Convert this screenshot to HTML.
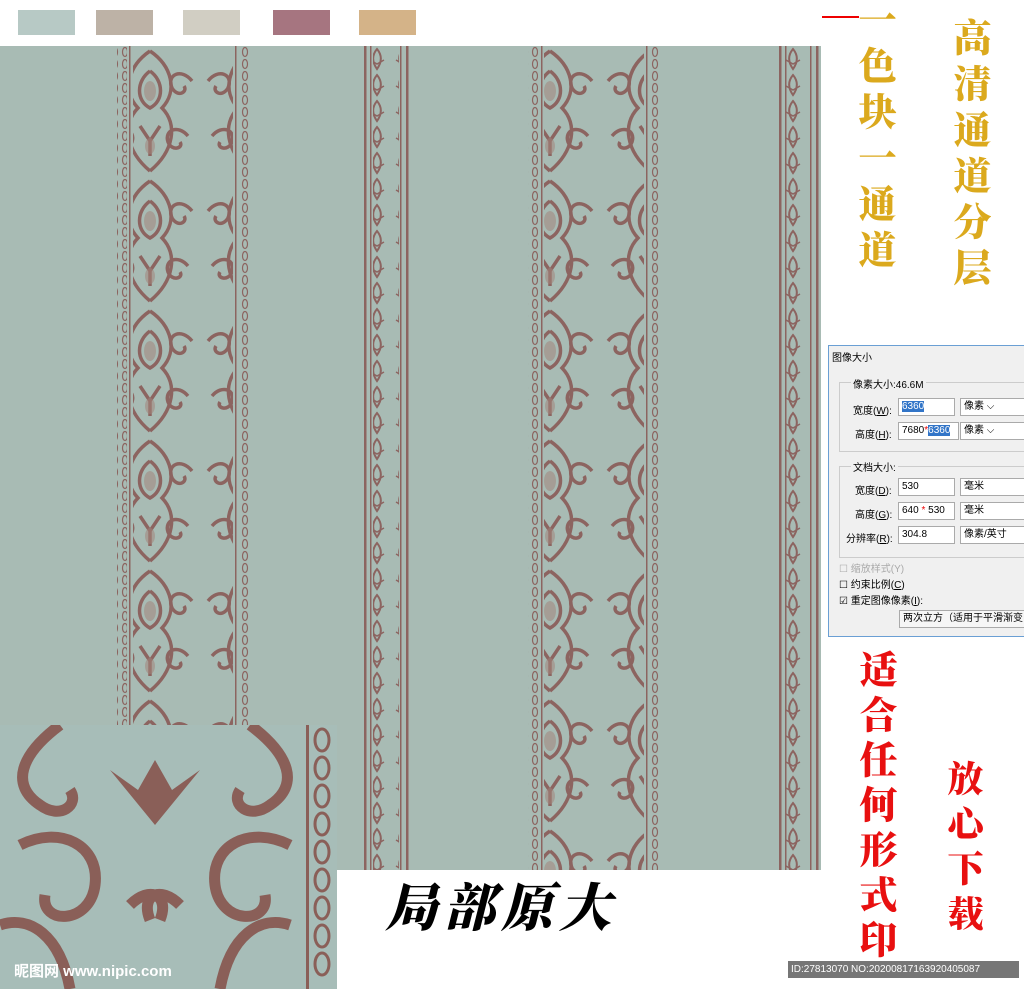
<!DOCTYPE html>
<html><head><meta charset="utf-8"><style>
body{margin:0;width:1024px;height:989px;position:relative;overflow:hidden;background:#fff;font-family:"Liberation Sans","Noto Sans CJK SC",sans-serif}
.sw{position:absolute;top:10px;width:57px;height:25px}
.v{position:absolute;writing-mode:vertical-rl;font-family:"Noto Serif CJK SC","Noto Sans CJK SC",serif;font-weight:900}
.dlg{position:absolute;left:828px;top:345px;width:196px;height:290px;background:#f0f0f0;border:1px solid #6a9fd4;font-size:10px;color:#000}
.dlg .r{position:absolute;white-space:nowrap}
.in{position:absolute;background:#fff;border:1px solid #aaa;height:16px;line-height:16px;padding-left:3px;font-size:10px}
.grp{position:absolute;border:1px solid #ccc}
</style></head><body>
<div class="sw" style="left:18px;background:#b7c9c5"></div>
<div class="sw" style="left:96px;background:#bdb2a6"></div>
<div class="sw" style="left:183px;background:#d1cec3"></div>
<div class="sw" style="left:273px;background:#a67580"></div>
<div class="sw" style="left:359px;background:#d4b388"></div>
<div style="position:absolute;left:822px;top:16px;width:37px;height:2px;background:#e00"></div>

<svg style="position:absolute;left:0;top:46px" width="821" height="824">
<defs>
<pattern id="orn" width="100" height="130" patternUnits="userSpaceOnUse">
<g fill="none" stroke="#8c6460" stroke-width="3.5">
<path d="M50 5 C28 20 22 45 38 62 C22 78 26 105 50 125"/>
<path d="M50 5 C72 20 78 45 62 62 C78 78 74 105 50 125"/>
<path d="M50 25 C36 35 36 55 50 62 C64 55 64 35 50 25"/>
<path d="M8 35 C18 22 34 28 28 42 C22 52 12 46 16 40"/>
<path d="M92 35 C82 22 66 28 72 42 C78 52 88 46 84 40"/>
<path d="M12 90 C22 78 36 84 32 96 C28 106 16 102 20 96"/>
<path d="M88 90 C78 78 64 84 68 96 C72 106 84 102 80 96"/>
<path d="M40 80 L50 95 L60 80 M50 95 L50 110"/>
</g>
<g fill="#a2847c" opacity="0.55"><ellipse cx="50" cy="45" rx="6" ry="10"/><ellipse cx="50" cy="100" rx="5" ry="8"/></g>
</pattern>
<pattern id="nar" width="26" height="26" patternUnits="userSpaceOnUse">
<path d="M13 3 C8 9 8 16 13 23 C18 16 18 9 13 3Z" fill="none" stroke="#8c6460" stroke-width="2"/>
<path d="M6 14 L13 18 L20 14" fill="none" stroke="#8c6460" stroke-width="1.5"/>
</pattern>
<pattern id="bead" width="10" height="12" patternUnits="userSpaceOnUse">
<ellipse cx="5" cy="6" rx="2.5" ry="4.5" fill="none" stroke="#8c6460" stroke-width="1.2"/>
</pattern>
</defs>
<rect width="821" height="824" fill="#a8bbb4"/>
<g>
<rect x="117" width="10" height="824" fill="url(#bead)"/>
<rect x="239" width="10" height="824" fill="url(#bead)"/>
<rect x="129" width="1.5" height="824" fill="#8c6460"/><rect x="235" width="1.5" height="824" fill="#8c6460"/>
<rect x="133" width="100" height="824" fill="url(#orn)"/>
</g>
<g>
<rect x="528" width="10" height="824" fill="url(#bead)"/>
<rect x="650" width="10" height="824" fill="url(#bead)"/>
<rect x="541" width="1.5" height="824" fill="#8c6460"/><rect x="646" width="1.5" height="824" fill="#8c6460"/>
<rect x="544" width="100" height="824" fill="url(#orn)"/>
</g>
<g>
<rect x="364" width="2.5" height="824" fill="#8c6460"/><rect x="406" width="2.5" height="824" fill="#8c6460"/>
<rect x="370" width="1.5" height="824" fill="#8c6460"/><rect x="400" width="1.5" height="824" fill="#8c6460"/>
<rect x="373" width="26" height="824" fill="url(#nar)"/>
</g>
<g>
<rect x="779" width="2.5" height="824" fill="#8c6460"/><rect x="816" width="2.5" height="824" fill="#8c6460"/>
<rect x="785" width="1.5" height="824" fill="#8c6460"/><rect x="810" width="1.5" height="824" fill="#8c6460"/>
<rect x="785" width="26" height="824" fill="url(#nar)"/>
</g>
</svg>

<svg style="position:absolute;left:0;top:725px" width="337" height="264">
<rect width="337" height="264" fill="#a7bdb8"/>
<g fill="none" stroke="#8a5f58" stroke-width="11">
<path d="M60 0 C20 30 10 60 40 80 C60 95 80 80 70 65"/>
<path d="M250 0 C290 30 300 60 270 80 C250 95 230 80 240 65"/>
<path d="M20 120 C60 100 100 120 95 160 C90 200 40 200 45 170"/>
<path d="M290 120 C250 100 210 120 215 160 C220 200 270 200 265 170"/>
<path d="M0 200 C30 190 60 210 70 264"/>
<path d="M290 200 C260 190 230 210 220 264"/>
<path d="M130 180 C150 160 170 170 160 195 M180 180 C160 160 140 170 150 195"/>
</g>
<path d="M110 45 L155 100 L200 45 L172 65 L155 35 L138 65Z" fill="#8a5f58"/>
<g fill="none" stroke="#8a5f58" stroke-width="3"><ellipse cx="322" cy="15" rx="7" ry="11"/><ellipse cx="322" cy="43" rx="7" ry="11"/><ellipse cx="322" cy="71" rx="7" ry="11"/><ellipse cx="322" cy="99" rx="7" ry="11"/><ellipse cx="322" cy="127" rx="7" ry="11"/><ellipse cx="322" cy="155" rx="7" ry="11"/><ellipse cx="322" cy="183" rx="7" ry="11"/><ellipse cx="322" cy="211" rx="7" ry="11"/><ellipse cx="322" cy="239" rx="7" ry="11"/></g>
<rect x="306" width="3" height="264" fill="#8a5f58"/>
<text x="14" y="251" font-size="15" fill="#fff" font-family="Liberation Sans,Noto Sans CJK SC,sans-serif" font-weight="bold">昵图网 www.nipic.com</text>
</svg>

<div style="position:absolute;left:385px;top:866px;font-size:52px;font-family:'Noto Serif CJK SC',serif;font-weight:900;letter-spacing:6px;font-style:italic">局部原大</div>

<div class="v" style="left:857px;top:0px;font-size:38px;color:#dba91d;line-height:40px;letter-spacing:8px">一色块一通道</div>
<div class="v" style="left:952px;top:18px;font-size:38px;color:#dba91d;line-height:40px;letter-spacing:8px">高清通道分层</div>
<div class="v" style="left:858px;top:650px;font-size:38px;color:#e81010;line-height:40px;letter-spacing:7px">适合任何形式印</div>
<div class="v" style="left:945px;top:760px;font-size:36px;color:#e81010;line-height:40px;letter-spacing:9px">放心下载</div>

<div class="dlg">
<div class="r" style="left:3px;top:3px">图像大小</div>
<div class="grp" style="left:10px;top:36px;width:190px;height:68px"></div>
<div class="r" style="left:22px;top:30px;background:#f0f0f0;padding:0 2px">像素大小:46.6M</div>
<div class="r" style="left:24px;top:56px">宽度(<u>W</u>):</div>
<div class="in" style="left:69px;top:52px;width:52px"><span style="background:#3275c8;color:#fff">6360</span></div>
<div class="in" style="left:131px;top:52px;width:62px">像素 ⌵</div>
<div class="r" style="left:26px;top:80px">高度(<u>H</u>):</div>
<div class="in" style="left:69px;top:76px;width:56px">7680<span style="color:#e00">*</span><span style="background:#3275c8;color:#fff">6360</span></div>
<div class="in" style="left:131px;top:76px;width:62px">像素 ⌵</div>
<div class="grp" style="left:10px;top:120px;width:190px;height:90px"></div>
<div class="r" style="left:22px;top:113px;background:#f0f0f0;padding:0 2px">文档大小:</div>
<div class="r" style="left:26px;top:136px">宽度(<u>D</u>):</div>
<div class="in" style="left:69px;top:132px;width:52px">530</div>
<div class="in" style="left:131px;top:132px;width:62px">毫米</div>
<div class="r" style="left:26px;top:160px">高度(<u>G</u>):</div>
<div class="in" style="left:69px;top:156px;width:52px">640 <span style="color:#e00">*</span> 530</div>
<div class="in" style="left:131px;top:156px;width:62px">毫米</div>
<div class="r" style="left:17px;top:184px">分辨率(<u>R</u>):</div>
<div class="in" style="left:69px;top:180px;width:52px">304.8</div>
<div class="in" style="left:131px;top:180px;width:62px">像素/英寸</div>
<div class="r" style="left:10px;top:214px;color:#aaa">☐ 缩放样式(Y)</div>
<div class="r" style="left:10px;top:230px">☐ 约束比例(<u>C</u>)</div>
<div class="r" style="left:10px;top:246px">☑ 重定图像像素(<u>I</u>):</div>
<div class="in" style="left:70px;top:264px;width:126px;background:#f6f6f6">两次立方（适用于平滑渐变</div>
</div>

<div style="position:absolute;left:788px;top:961px;width:228px;height:17px;background:#555;opacity:.8;color:#fff;font-size:10px;line-height:17px;padding-left:3px;white-space:nowrap">ID:27813070 NO:20200817163920405087</div>
</body></html>
